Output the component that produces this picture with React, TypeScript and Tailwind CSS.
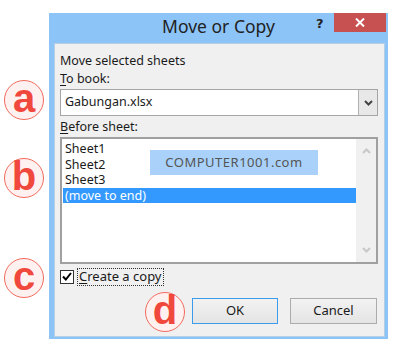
import React from 'react';

const font = { fontFamily: '"Noto Sans", "Open Sans", sans-serif' };

const Badge: React.FC<{ letter: string; className: string }> = ({ letter, className }) => (
  <div
    className={`absolute w-[40px] h-[40px] rounded-full border-[1.5px] border-[#f26a5e] bg-[#fff1ef] flex items-center justify-center ${className}`}
  >
    <span
      className="text-[40px] leading-none font-bold text-[#f0483c] -mt-[4px]"
      style={{ fontFamily: '"Liberation Sans", Arial, sans-serif' }}
    >
      {letter}
    </span>
  </div>
);

const Chevron: React.FC<{ up?: boolean; color?: string }> = ({ up, color = '#c8c8c8' }) => (
  <svg width="9" height="6" viewBox="0 0 9 6">
    <path
      d={up ? 'M1 5 L4.5 1.5 L8 5' : 'M1 1 L4.5 4.5 L8 1'}
      fill="none"
      stroke={color}
      strokeWidth="2"
    />
  </svg>
);

export default function App() {
  return (
    <div className="relative w-[400px] h-[350px] bg-white overflow-hidden text-[12.5px] text-[#1a1a1a]" style={font}>
      <div className="pt-[13px] pl-[49px]">
        {/* Dialog frame */}
        <div className="w-[339px] bg-[#8cc4f8] pl-[5px] pr-[3px] pb-[2px]">
          {/* Title bar */}
          <div className="relative h-[30px] flex items-center justify-center -ml-[5px] -mr-[3px]">
            <span className="text-[17.5px] text-[#222] leading-none -mt-[2px]" style={font}>
              Move or Copy
            </span>
            <span
              className="absolute left-[267px] top-[1px] text-[13px] font-bold text-[#222]"
              style={{ fontFamily: '"DejaVu Sans", sans-serif' }}
            >
              ?
            </span>
            <div className="absolute right-[2px] top-0 w-[52px] h-[19px] bg-[#c75050] flex items-center justify-center">
              <svg width="10" height="9" viewBox="0 0 10 9">
                <path d="M1 0.5 L9 8.5 M9 0.5 L1 8.5" stroke="#fff" strokeWidth="2" />
              </svg>
            </div>
          </div>

          {/* Panel */}
          <div className="h-[294px] bg-[#f0f0f0] border border-[#b5cfe6] px-[5px] pt-[8px] flex flex-col">
            <div className="h-[18px] leading-[18px]">Move selected sheets</div>
            <div className="h-[18px] leading-[18px]">
              <span className="underline underline-offset-2">T</span>o book:
            </div>
            <div className="mt-[1px] h-[27px] w-[318px] bg-white border border-[#a5a5a5] flex items-center">
              <span className="flex-1 pl-[4px]">Gabungan.xlsx</span>
              <div className="w-[19px] h-[25px] bg-[#e8e8e8] border-l border-[#b0b0b0] flex items-center justify-center">
                <Chevron color="#444" />
              </div>
            </div>
            <div className="mt-[2px] h-[18px] leading-[18px]">
              <span className="underline underline-offset-2">B</span>efore sheet:
            </div>
            <div className="relative mt-[1px] h-[127px] w-[318px] bg-white border-2 border-[#a0a0a0] flex">
              <div className="flex-1 pt-[2px] pl-[1px] leading-[15.5px]">
                <div className="pl-[2px]">Sheet1</div>
                <div className="pl-[2px]">Sheet2</div>
                <div className="pl-[2px]">Sheet3</div>
                <div className="pl-[2px] bg-[#3399ff] text-white">(move to end)</div>
              </div>
              <div className="w-[20px] bg-[#f0f0f0] flex flex-col items-center justify-between py-[9px]">
                <Chevron up />
                <Chevron />
              </div>
              <div className="absolute left-[88px] top-[11px] w-[168px] h-[25px] bg-[#a9d1f9] flex items-center justify-center text-[13px] text-[#555] tracking-[0.5px]">
                COMPUTER1001.com
              </div>
            </div>
            <div className="mt-[3px] h-[19px] flex items-center">
              <div className="w-[14px] h-[14px] bg-white border border-[#333] flex items-center justify-center">
                <svg width="10" height="9" viewBox="0 0 10 9">
                  <path d="M1 4.5 L3.8 7.5 L9 1" fill="none" stroke="#000" strokeWidth="2" />
                </svg>
              </div>
              <div className="ml-[3px] h-[18px] px-[1px] border border-dotted border-[#333] flex items-center text-[13px]">
                <span className="underline underline-offset-2">C</span>reate a copy
              </div>
            </div>
            <div className="mt-[12px] flex justify-end gap-[12px] pr-[2px]">
              <button className="w-[86px] h-[26px] border border-[#3c9cec] bg-gradient-to-b from-[#f2f2f2] to-[#e4e4e4] text-[13px]">
                OK
              </button>
              <button className="w-[87px] h-[26px] border border-[#acacac] bg-gradient-to-b from-[#f2f2f2] to-[#e4e4e4] text-[13px]">
                Cancel
              </button>
            </div>
          </div>
        </div>
      </div>

      {/* Annotation badges */}
      <Badge letter="a" className="left-[4px] top-[80px]" />
      <Badge letter="b" className="left-[4px] top-[158px]" />
      <Badge letter="c" className="left-[4px] top-[258px]" />
      <Badge letter="d" className="left-[145px] top-[292px]" />
    </div>
  );
}
